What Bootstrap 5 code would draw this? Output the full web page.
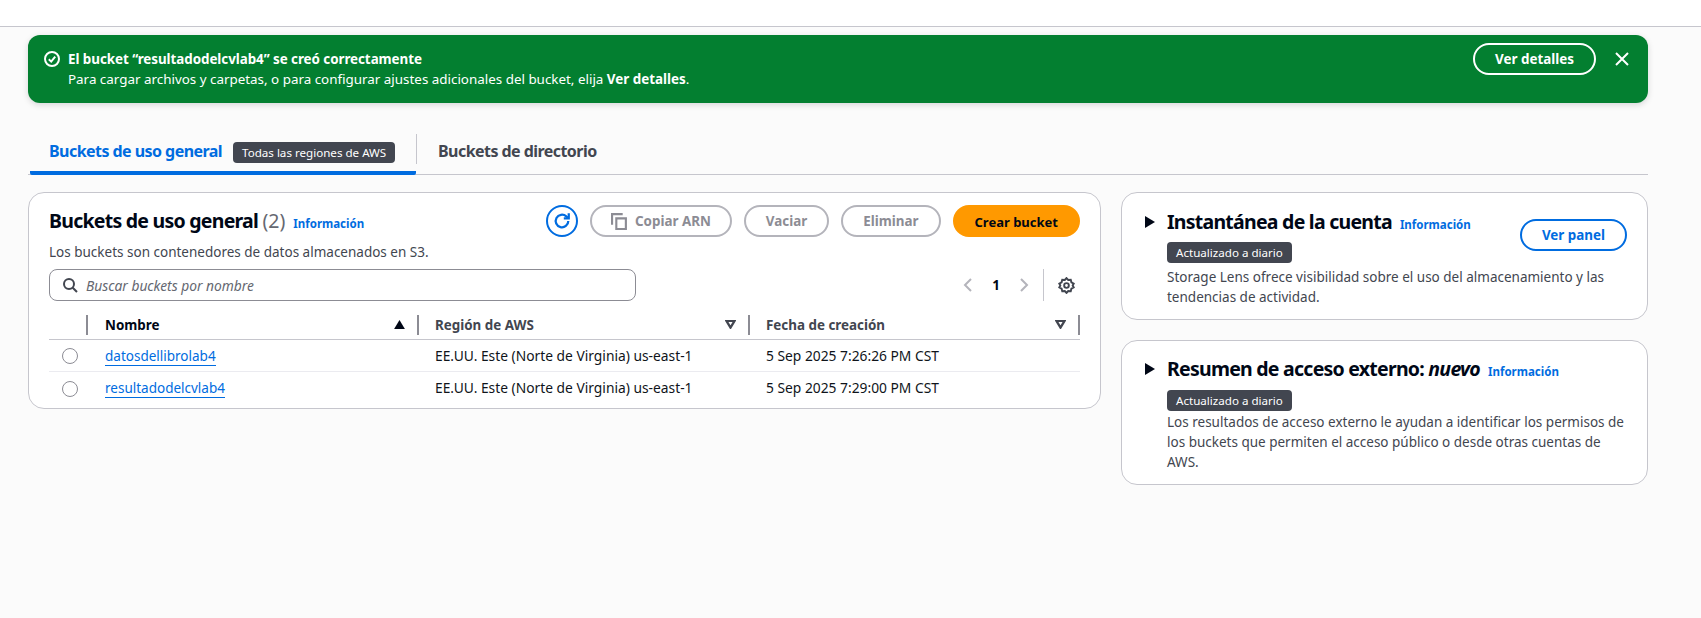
<!DOCTYPE html>
<html lang="es">
<head>
  <meta charset="UTF-8">
  <title>Buckets | S3</title>
  <link href="https://cdn.jsdelivr.net/npm/bootstrap@5.3.0/dist/css/bootstrap.min.css" rel="stylesheet">
  <style>
    body { background: #fbfbfb; font-family: "Noto Sans", sans-serif; font-size: 13.4px; color: #000716; height: 618px; overflow: hidden; }
    .top-strip { height: 27px; background: #fff; border-bottom: 1px solid #c6c6cd; }
    .page-wrap { padding: 8px 53px 0 28px; }
    .flash-ok { height: 68px; background: #037f30; color: #fff; border-radius: 12px; padding: 8px 18px 0 16px; box-shadow: 0 2px 6px rgba(0,7,22,.15); line-height: 20px; }
    .flash-icon { margin-top: 8px; }
    .flash-body { margin-top: 6px; }
    .flash-title { font-weight: 700; letter-spacing: -.05px; }
    .flash-close { margin-top: 8px; margin-left: 18px; }
    .btn-aws { border-radius: 20px; font-family: inherit; font-size: 13.4px; font-weight: 700; height: 32px; padding: 2px 20px 0; border: 2px solid; line-height: 1; background: transparent; display: inline-flex; align-items: center; white-space: nowrap; }
    .btn-flash { color: #fff; border-color: #fff; margin-left: auto; }
    .btn-off { color: #8c8c94; border-color: #b4b4bb; }
    .btn-go { background: #ff9900; border-color: #ff9900; color: #000716; font-size: 13px; }
    .btn-line { border-color: #006ce0; color: #006ce0; margin-top: 11px; }
    .btn-tight { padding: 2px 19px 0; }
    .copy-icon { margin-right: 7px; margin-top: -2px; }
    .tab-row { margin-top: 28px; height: 44px; border-bottom: 1px solid #c6c6cd; }
    .tab-item { font-size: 16px; font-weight: 700; letter-spacing: -.55px; padding: 8px 21px 0 21px; height: 44px; color: #424650; }
    .tab-on { color: #006ce0; width: 386px; margin-left: 2px; padding-left: 19px; border-bottom: 4px solid #006ce0; border-radius: 0 0 2px 2px; }
    .tab-gap { width: 1px; height: 30px; background: #c6c6cd; margin-top: 3px; }
    .tag-dark { background: #424650; color: #fff; font-size: 11.6px; font-weight: 400; letter-spacing: 0; line-height: 21px; border-radius: 4px; padding: 0 9px; display: inline-block; white-space: nowrap; }
    .tab-tag { margin-top: 3px; margin-left: 3px; }
    .panes { margin-top: 17px; gap: 20px; }
    .box { background: #fff; border: 1px solid #c6c6cd; border-radius: 16px; }
    .box-main { width: 1073px; height: 217px; padding: 10px 20px 0 20px; }
    .box-side { width: 527px; padding: 15px 20px 0 22px; }
    .box-snap { height: 128px; }
    .box-access { height: 145px; padding-top: 14px; }
    .side-col { gap: 20px; }
    .box-title { font-size: 19.5px; font-weight: 700; letter-spacing: -.75px; line-height: 28px; color: #000716; }
    .box-title span { font-weight: 400; color: #656871; letter-spacing: 0; }
    .info-link { font-size: 11.5px; font-weight: 700; color: #006ce0; text-decoration: none; margin-left: 8px; }
    .muted-text { color: #424650; line-height: 20px; font-size: 13.5px; }
    .main-sub { margin-top: 7px; }
    .tools { gap: 12px; margin-top: 2px; }
    .round-btn { width: 32px; height: 32px; border: 2px solid #006ce0; border-radius: 50%; }
    .search-row { margin-top: 7px; }
    .search-box { width: 587px; height: 32px; border: 1px solid #8c8c94; border-radius: 8px; padding-left: 12px; gap: 8px; color: #656871; font-style: italic; font-size: 13.8px; }
    .search-label { padding-top: 3px; }
    .pager { margin-left: auto; gap: 18px; padding-right: 6px; font-weight: 700; }
    .pager-sep { width: 1px; height: 32px; background: #c6c6cd; margin-left: -5px; margin-right: -4px; }
    .gear-icon { margin-right: -1px; }
    .grid-row { display: grid; grid-template-columns: 39px 331px 331px 330px; align-items: center; }
    .grid-head { height: 30px; font-weight: 700; color: #424650; border-bottom: 1px solid #c6c6cd; margin-top: 9px; }
    .grid-body { height: 31px; border-bottom: 1px solid #ebebf0; color: #0f141a; font-size: 13.8px; margin-top: 1px; }
    .grid-body:last-child { border-bottom: 0; margin-top: 1px; }
    .head-cell { height: 20px; padding: 0 12px 0 17px; display: flex; align-items: center; justify-content: space-between; border-right: 2px solid #8c8c94; }
    .head-cell + .head-cell + .head-cell { padding-left: 16px; }
    .head-label { padding-top: 2px; }
    .head-name { color: #000716; }
    .cell { padding-left: 16px; white-space: nowrap; }
    .cell-name { padding-left: 17px; font-size: 13.5px; }
    .bucket-link { color: #006ce0; text-decoration: none; border-bottom: 1px solid #006ce0; }
    .radio-dot { width: 16px; height: 16px; border: 1px solid #8c8c94; border-radius: 50%; display: block; margin-left: 13px; }
    .tri { flex: none; }
    .side-arrow { flex: none; margin-top: 8px; margin-right: 11px; }
    .side-tag { margin-top: 6px; }
    .box-access .side-tag { margin-top: 7px; }
    .side-text { margin-top: 1px; }
    .side-text-wide { margin-top: 4px; }
  </style>
</head>
<body>

<div class="top-strip"></div>

<div class="page-wrap">
  <div class="flash-ok d-flex">
    <svg class="flash-icon me-2 flex-shrink-0" width="16" height="16" viewBox="0 0 16 16" fill="none" stroke="#fff" stroke-width="2"><circle cx="8" cy="8" r="7"/><path d="M4.800 8.300 7.200 10.600 11.200 5.600"/></svg>
    <div class="flash-body">
      <div class="flash-title">El bucket “resultadodelcvlab4” se creó correctamente</div>
      <div>Para cargar archivos y carpetas, o para configurar ajustes adicionales del bucket, elija <b>Ver detalles</b>.</div>
    </div>
    <button class="btn-aws btn-flash" type="button">Ver detalles</button>
    <svg class="flash-close flex-shrink-0" width="16" height="16" viewBox="0 0 16 16" fill="none" stroke="#fff" stroke-width="2"><path d="M2 2 14 14M14 2 2 14"/></svg>
  </div>

  <div class="tab-row d-flex">
    <div class="tab-item tab-on d-flex align-items-start gap-2 text-nowrap">
      <span>Buckets de uso general</span>
      <span class="tag-dark tab-tag">Todas las regiones de AWS</span>
    </div>
    <div class="tab-gap"></div>
    <div class="tab-item">Buckets de directorio</div>
  </div>

  <div class="panes d-flex align-items-start">
    <div class="box box-main">
      <div class="d-flex align-items-start">
        <div class="pt-1">
          <div class="d-flex align-items-baseline">
            <div class="box-title">Buckets de uso general <span>(2)</span></div>
            <a class="info-link" href="#">Información</a>
          </div>
          <div class="muted-text main-sub">Los buckets son contenedores de datos almacenados en S3.</div>
        </div>
        <div class="tools d-flex ms-auto align-items-center">
          <div class="round-btn d-flex align-items-center justify-content-center">
            <svg width="18" height="18" viewBox="0 0 16 16" fill="none" stroke="#006ce0" stroke-width="2"><path d="M13.600 8a5.600 5.600 0 1 1-1.800-4.100L13.600 5.400"/><path d="M14 1.200V5.600H9.600"/></svg>
          </div>
          <button class="btn-aws btn-off btn-tight" type="button">
            <svg class="copy-icon" width="17" height="17" viewBox="0 0 16 16" fill="none" stroke="#8c8c94" stroke-width="2"><path d="M5 5H14V15H5Z"/><path d="M11 1H1V11"/></svg>Copiar ARN</button>
          <button class="btn-aws btn-off" type="button">Vaciar</button>
          <button class="btn-aws btn-off" type="button">Eliminar</button>
          <button class="btn-aws btn-go" type="button">Crear bucket</button>
        </div>
      </div>

      <div class="search-row d-flex align-items-center">
        <div class="search-box d-flex align-items-center">
          <svg width="16" height="16" viewBox="0 0 16 16" fill="none" stroke="#424650" stroke-width="2"><circle cx="7" cy="7" r="5"/><path d="M10.700 10.700 15 15"/></svg>
          <span class="search-label">Buscar buckets por nombre</span>
        </div>
        <div class="pager d-flex align-items-center">
          <svg width="12" height="16" viewBox="0 0 12 16" fill="none" stroke="#b4b4bb" stroke-width="2"><path d="M9 2 3 8 9 14"/></svg>
          <span>1</span>
          <svg width="12" height="16" viewBox="0 0 12 16" fill="none" stroke="#b4b4bb" stroke-width="2"><path d="M3 2 9 8 3 14"/></svg>
          <div class="pager-sep"></div>
          <svg class="gear-icon" width="17" height="17" viewBox="0 0 16 16" fill="none" stroke="#424650" stroke-width="1.800"><circle cx="8" cy="8" r="2.200"/><path d="M8 1 9.600 2.800 12 2.600 12.600 5 14.800 6.200 13.800 8 14.800 9.800 12.600 11 12 13.400 9.600 13.200 8 15 6.400 13.200 4 13.400 3.400 11 1.200 9.800 2.200 8 1.200 6.200 3.400 5 4 2.600 6.400 2.800Z"/></svg>
        </div>
      </div>

      <div class="grid-row grid-head">
        <div class="head-cell"></div>
        <div class="head-cell"><span class="head-name head-label">Nombre</span><svg class="tri" width="11" height="9" viewBox="0 0 12 10"><path d="M6 0 12 10H0Z" fill="#000716"/></svg></div>
        <div class="head-cell"><span class="head-label">Región de AWS</span><svg class="tri" width="11" height="9" viewBox="0 0 12 10" fill="none" stroke="#424650" stroke-width="2.500"><path d="M1.500 1H10.500L6 8.500Z"/></svg></div>
        <div class="head-cell"><span class="head-label">Fecha de creación</span><svg class="tri" width="11" height="9" viewBox="0 0 12 10" fill="none" stroke="#424650" stroke-width="2.500"><path d="M1.500 1H10.500L6 8.500Z"/></svg></div>
      </div>
      <div class="grid-row grid-body">
        <div><span class="radio-dot"></span></div>
        <div class="cell cell-name"><a class="bucket-link" href="#">datosdellibrolab4</a></div>
        <div class="cell">EE.UU. Este (Norte de Virginia) us-east-1</div>
        <div class="cell">5 Sep 2025 7:26:26 PM CST</div>
      </div>
      <div class="grid-row grid-body">
        <div><span class="radio-dot"></span></div>
        <div class="cell cell-name"><a class="bucket-link" href="#">resultadodelcvlab4</a></div>
        <div class="cell">EE.UU. Este (Norte de Virginia) us-east-1</div>
        <div class="cell">5 Sep 2025 7:29:00 PM CST</div>
      </div>
    </div>

    <div class="side-col d-flex flex-column">
      <div class="box box-side box-snap d-flex">
        <svg class="side-arrow" width="12" height="12" viewBox="0 0 12 12"><path d="M1 0 11 6 1 12Z" fill="#000716"/></svg>
        <div class="flex-grow-1">
          <div class="d-flex">
            <div class="flex-grow-1">
              <div class="d-flex align-items-baseline">
                <div class="box-title">Instantánea de la cuenta</div>
                <a class="info-link" href="#">Información</a>
              </div>
              <span class="tag-dark side-tag">Actualizado a diario</span>
            </div>
            <button class="btn-aws btn-line" type="button">Ver panel</button>
          </div>
          <div class="muted-text side-text-wide">Storage Lens ofrece visibilidad sobre el uso del almacenamiento y las tendencias de actividad.</div>
        </div>
      </div>
      <div class="box box-side box-access d-flex">
        <svg class="side-arrow" width="12" height="12" viewBox="0 0 12 12"><path d="M1 0 11 6 1 12Z" fill="#000716"/></svg>
        <div class="flex-grow-1">
          <div class="d-flex align-items-baseline">
            <div class="box-title">Resumen de acceso externo: <i>nuevo</i></div>
            <a class="info-link" href="#">Información</a>
          </div>
          <span class="tag-dark side-tag">Actualizado a diario</span>
          <div class="muted-text side-text">Los resultados de acceso externo le ayudan a identificar los permisos de los buckets que permiten el acceso público o desde otras cuentas de AWS.</div>
        </div>
      </div>
    </div>
  </div>
</div>

<script src="https://cdn.jsdelivr.net/npm/bootstrap@5.3.0/dist/js/bootstrap.bundle.min.js"></script>
</body>
</html>
